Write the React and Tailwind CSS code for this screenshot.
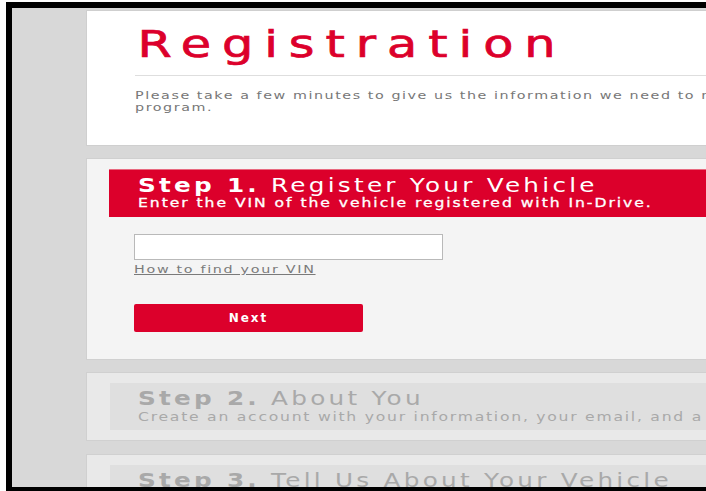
import React from 'react';

const font = { fontFamily: '"DejaVu Sans", "Liberation Sans", sans-serif' };

// The brand face is an extended sans; stretch DejaVu sideways to get close
const Wide = ({ className = '', children }) => (
  <div className={`w-max origin-left scale-x-[1.3] whitespace-nowrap ${className}`}>{children}</div>
);

// Collapsed step panels below the active one
const StepPanel = ({ num, title, desc }) => (
  <div className="bg-[#e9e9e9] border border-[#d0d0d0] pt-[10px] pb-[10px] pl-[23px]">
    <div className="bg-[#dfdfdf] h-[47px] pl-[28px] pt-[3px] text-[#a9a9a9] overflow-hidden">
      <Wide className="text-[19px] leading-[24px] tracking-[2.5px]">
        <span className="font-bold">Step {num}.</span> {title}
      </Wide>
      {desc && <Wide className="text-[12px] leading-[14px] tracking-[1.35px]">{desc}</Wide>}
    </div>
  </div>
);

export default function App() {
  return (
    <div className="w-[706px] h-[491px] bg-white pt-[2px] pl-[6px] overflow-hidden" style={font}>
      <div className="h-full bg-[#d8d8d8] border-l-[6px] border-t-[6px] border-b-[4px] border-black overflow-hidden pl-[74px] pt-[2px]">
        <div className="flex flex-col gap-[12px] w-[700px]">
          {/* Intro */}
          <div className="bg-white border border-[#cfcfcf] h-[136px] pl-[48px] pt-[11px] overflow-hidden">
            <Wide className="text-[#dc002b] text-[38px] leading-[44px] tracking-[8.4px] pl-[2px] [-webkit-text-stroke-width:0.7px]">
              Registration
            </Wide>
            <div className="border-t border-[#dedede] mt-[9px]" />
            <div className="mt-[14px] text-[#777] text-[11px] leading-[12px] tracking-[1.2px]">
              <Wide>Please take a few minutes to give us the information we need to register you for the</Wide>
              <Wide>program.</Wide>
            </div>
          </div>

          {/* Step 1 – active */}
          <div className="bg-[#f4f4f4] border border-[#d0d0d0] h-[202px] pt-[10px] pl-[22px]">
            <div className="bg-[#dc002b] border-t border-[#e86a80] h-[48px] pl-[29px] pt-[4px] text-white overflow-hidden">
              <Wide className="text-[19px] leading-[22px] tracking-[2.5px]">
                <span className="font-bold">Step 1.</span> Register Your Vehicle
              </Wide>
              <Wide className="text-[12px] leading-[14px] tracking-[1.5px] [-webkit-text-stroke-width:0.3px]">
                Enter the VIN of the vehicle registered with In-Drive.
              </Wide>
            </div>
            <div className="pl-[25px] pt-[17px]">
              <input
                type="text"
                className="block w-[309px] h-[26px] bg-white border border-[#b9b9b9] outline-none"
              />
              <a href="#" className="block w-fit mt-[3px] text-[#7a7a7a] underline">
                <Wide className="text-[11px] leading-[13px] tracking-[1.3px]">How to find your VIN</Wide>
              </a>
              <button className="mt-[28px] w-[229px] h-[28px] rounded-[2px] bg-[#dc002b] text-white text-[12px] font-semibold tracking-[2px]">
                Next
              </button>
            </div>
          </div>

          <div className="flex flex-col gap-[13px]">
            <StepPanel
              num="2"
              title="About You"
              desc="Create an account with your information, your email, and a password."
            />
            <StepPanel num="3" title="Tell Us About Your Vehicle" desc="Tell us about your vehicle." />
          </div>
        </div>
      </div>
    </div>
  );
}
